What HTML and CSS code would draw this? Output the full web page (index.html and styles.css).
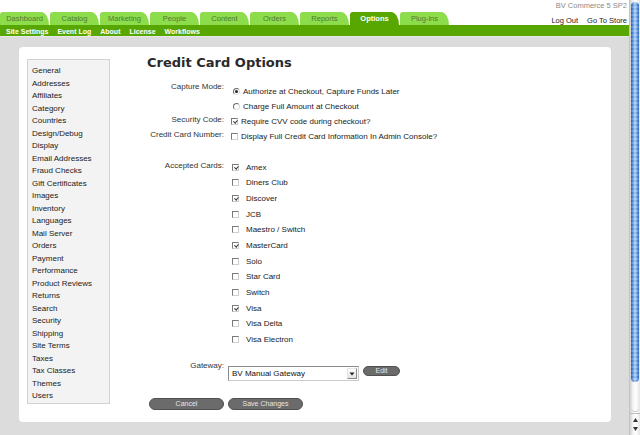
FILE: index.html
```html
<!DOCTYPE html>
<html>
<head>
<meta charset="utf-8">
<title>Credit Card Options</title>
<link rel="stylesheet" href="styles.css">
</head>
<body>
<div class="window">
  <div class="page">
    <header class="header">
      <div class="headtop">
        <nav class="tabs">
          <a class="tab">Dashboard</a>
          <a class="tab">Catalog</a>
          <a class="tab">Marketing</a>
          <a class="tab">People</a>
          <a class="tab">Content</a>
          <a class="tab">Orders</a>
          <a class="tab">Reports</a>
          <a class="tab active">Options</a>
          <a class="tab">Plug-ins</a>
        </nav>
        <div class="util">
          <div class="version">BV Commerce 5 SP2</div>
          <div class="links"><a>Log Out</a><a>Go To Store</a></div>
        </div>
      </div>
      <nav class="subnav">
        <a>Site Settings</a><a>Event Log</a><a>About</a><a>License</a><a>Workflows</a>
      </nav>
    </header>
    <div class="content">
      <div class="panel">
        <ul class="sidebar">
          <li>General</li><li>Addresses</li><li>Affiliates</li><li>Category</li><li>Countries</li>
          <li>Design/Debug</li><li>Display</li><li>Email Addresses</li><li>Fraud Checks</li>
          <li>Gift Certificates</li><li>Images</li><li>Inventory</li><li>Languages</li>
          <li>Mail Server</li><li>Orders</li><li>Payment</li><li>Performance</li>
          <li>Product Reviews</li><li>Returns</li><li>Search</li><li>Security</li>
          <li>Shipping</li><li>Site Terms</li><li>Taxes</li><li>Tax Classes</li><li>Themes</li><li>Users</li>
        </ul>
        <main class="main">
          <h1 class="title">Credit Card Options</h1>
          <div class="form">
            <div class="label">Capture Mode:</div>
            <div class="ctl capture">
              <div class="line"><span class="radio on"></span>Authorize at Checkout, Capture Funds Later</div>
              <div class="line"><span class="radio"></span>Charge Full Amount at Checkout</div>
            </div>

            <div class="label shift">Security Code:</div>
            <div class="ctl">
              <div class="line"><span class="cb on"></span>Require CVV code during checkout?</div>
            </div>

            <div class="label shift">Credit Card Number:</div>
            <div class="ctl">
              <div class="line"><span class="cb"></span>Display Full Credit Card Information In Admin Console?</div>
            </div>

            <div class="label cards-label">Accepted Cards:</div>
            <div class="ctl cards">
              <div class="line"><span class="cb on"></span>Amex</div>
              <div class="line"><span class="cb"></span>Diners Club</div>
              <div class="line"><span class="cb on"></span>Discover</div>
              <div class="line"><span class="cb"></span>JCB</div>
              <div class="line"><span class="cb"></span>Maestro / Switch</div>
              <div class="line"><span class="cb on"></span>MasterCard</div>
              <div class="line"><span class="cb"></span>Solo</div>
              <div class="line"><span class="cb"></span>Star Card</div>
              <div class="line"><span class="cb"></span>Switch</div>
              <div class="line"><span class="cb on"></span>Visa</div>
              <div class="line"><span class="cb"></span>Visa Delta</div>
              <div class="line"><span class="cb"></span>Visa Electron</div>
            </div>

            <div class="label gw-label">Gateway:</div>
            <div class="ctl gateway">
              <div class="select">
                <span>BV Manual Gateway</span>
                <span class="arrow"><svg width="6" height="5" viewBox="0 0 6 5"><path d="M0.5 1.5h5L3 4.5z" fill="#222"/></svg></span>
              </div>
              <a class="btn edit">Edit</a>
            </div>
          </div>
          <div class="actions">
            <a class="btn">Cancel</a>
            <a class="btn">Save Changes</a>
          </div>
        </main>
      </div>
    </div>
  </div>
  <div class="scrollbar">
    <div class="thumb"></div>
    <div class="track"></div>
    <div class="arrows">
      <svg width="5" height="4" viewBox="0 0 5 4"><path d="M2.5 0L5 4H0z" fill="#333"/></svg>
      <svg width="5" height="4" viewBox="0 0 5 4"><path d="M0 0h5L2.5 4z" fill="#333"/></svg>
    </div>
  </div>
</div>
</body>
</html>
```

FILE: styles.css
```css
* { box-sizing: border-box; }
html, body { margin: 0; padding: 0; }
body {
  width: 640px;
  height: 435px;
  overflow: hidden;
  font-family: "Liberation Sans", Arial, sans-serif;
  font-size: 8px;
  color: #222;
  background: #dcdcdc;
}
a { text-decoration: none; cursor: pointer; }

.window { display: flex; height: 435px; }
.page { flex: 1; min-width: 0; display: flex; flex-direction: column; background: #dcdcdc; }

/* header */
.header { background: #fff; }
.headtop { display: flex; justify-content: space-between; height: 25px; }
.tabs { display: flex; align-items: flex-end; gap: 1px; }
.tab {
  width: 49px;
  height: 13px;
  line-height: 13px;
  text-align: center;
  font-size: 7.5px;
  color: #4f7a36;
  background: #8ddc4c;
  border-radius: 3px 8px 0 0 / 3px 13px 0 0;
}
.tab.active { background: #58a700; color: #fff; font-weight: bold; }
.util { padding: 1px 2px 0 0; text-align: right; font-size: 7.5px; }
.version { line-height: 9px; color: #8a8a8a; }
.links { margin-top: 6px; line-height: 9px; display: flex; gap: 9px; justify-content: flex-end; }
.links a { color: #222; }

.subnav {
  height: 12px;
  background: #58a700;
  padding: 2px 0 0 6px;
  display: flex;
  gap: 9px;
  font-size: 7px;
  font-weight: bold;
  line-height: 9px;
  border-bottom: 1px solid #e8e8e8;
}
.subnav a { color: #fff; }

/* content */
.content { flex: 1; display: flex; padding: 10px 18px 13px 19px; }
.panel {
  flex: 1;
  display: flex;
  align-items: flex-start;
  background: #fff;
  border-radius: 4px;
  padding: 7px 8px 0;
}
.sidebar {
  list-style: none;
  margin: 5px 0 0;
  padding: 5px 0 0 4px;
  width: 83px;
  height: 345px;
  background: #f3f3f3;
  border: 1px solid #d2d2d2;
}
.sidebar li { height: 12.5px; line-height: 12.5px; color: #222; white-space: nowrap; }

.main { flex: 1; margin-left: 29px; }
.title {
  margin: 0;
  padding-left: 8px;
  font-family: "DejaVu Sans", sans-serif;
  font-weight: bold;
  font-size: 13px;
  line-height: 18px;
  color: #2a2a2a;
}

.form {
  display: grid;
  grid-template-columns: 85px 1fr;
  column-gap: 4px;
  margin-top: 10px;
}
.label { text-align: right; line-height: 10px; white-space: nowrap; color: #333; }
.label.shift { padding-top: 1.5px; }
.ctl { color: #1a1a1a; }
.capture { padding-top: 1.5px; }
.line { display: flex; align-items: center; height: 15px; white-space: nowrap; }

.radio {
  width: 7px; height: 7px;
  margin: 0 3px 0 5px;
  border-radius: 50%;
  border: 1px solid;
  border-color: #6a6a6a #d8d8d8 #e2e2e2 #6a6a6a;
  background: #fff;
  position: relative;
}
.radio.on::after {
  content: "";
  position: absolute;
  left: 1px; top: 1px;
  width: 3px; height: 3px;
  border-radius: 50%;
  background: #222;
}
.cb {
  width: 7px; height: 7px;
  margin: 0 3px 0 3px;
  border: 1px solid;
  border-color: #7a7a7a #cfcfcf #cfcfcf #7a7a7a;
  background: #fff;
  position: relative;
  flex: none;
}
.cb.on::after {
  content: "";
  position: absolute;
  left: 1.5px; top: 0;
  width: 1.5px; height: 3px;
  border-right: 1px solid #333;
  border-bottom: 1px solid #333;
  transform: rotate(40deg);
}

.cards-label, .cards { margin-top: 16px; }
.cards-label { padding-top: 1px; }
.cards .line { height: 15.65px; }
.cards .cb { margin: 0 7px 0 4px; }

.gw-label { margin-top: 14px; }
.gateway { margin-top: 19px; display: flex; align-items: flex-start; gap: 4px; }
.select {
  width: 131px;
  height: 15px;
  display: flex;
  align-items: center;
  justify-content: space-between;
  padding-left: 3px;
  border: 1px solid;
  border-color: #8a8a8a #cccccc #cccccc #8a8a8a;
  background: #fff;
  color: #111;
  font-size: 8px;
}
.arrow {
  width: 10px; height: 11px;
  margin-right: 1px;
  display: flex; align-items: center; justify-content: center;
  border: 1px solid;
  border-color: #e6e6e6 #8a8a8a #8a8a8a #e6e6e6;
  background: linear-gradient(#fff, #e4e4e4);
}

.btn {
  display: block;
  height: 12px;
  border-radius: 6px;
  background: #6b6b6b;
  border: 1px solid #505050;
  color: #e6e6e6;
  font-size: 7px;
  line-height: 10px;
  text-align: center;
}
.btn.edit { width: 37px; height: 10px; line-height: 8px; }
.actions { display: flex; gap: 4px; margin-top: 17px; padding-left: 10px; }
.actions .btn { width: 75px; }

/* scrollbar */
.scrollbar {
  width: 11px;
  display: flex;
  flex-direction: column;
  border-left: 1px solid #c4c4c4;
  background: linear-gradient(to right, #d0d0d0, #f4f4f4 30%, #ffffff 60%, #e4e4e4);
}
.thumb {
  height: 380px;
  margin: 2px 1px 0 1px;
  border-radius: 4px;
  background:
    repeating-linear-gradient(to bottom, rgba(255,255,255,0.14) 0 2px, rgba(0,0,0,0.05) 2px 4px),
    linear-gradient(to right, #2a5cb0, #5f98e8 25%, #b5d8fb 50%, #6aa3ee 75%, #2d60b8);
}
.track { flex: 1; margin: 0 1px 1px; border-radius: 0 0 4px 4px; border-bottom: 1px solid #c8c8c8; }
.arrows {
  height: 22px;
  display: flex;
  flex-direction: column;
  align-items: center;
  justify-content: space-around;
  padding: 2px 0;
  border-top: 1px solid #bdbdbd;
}
```
